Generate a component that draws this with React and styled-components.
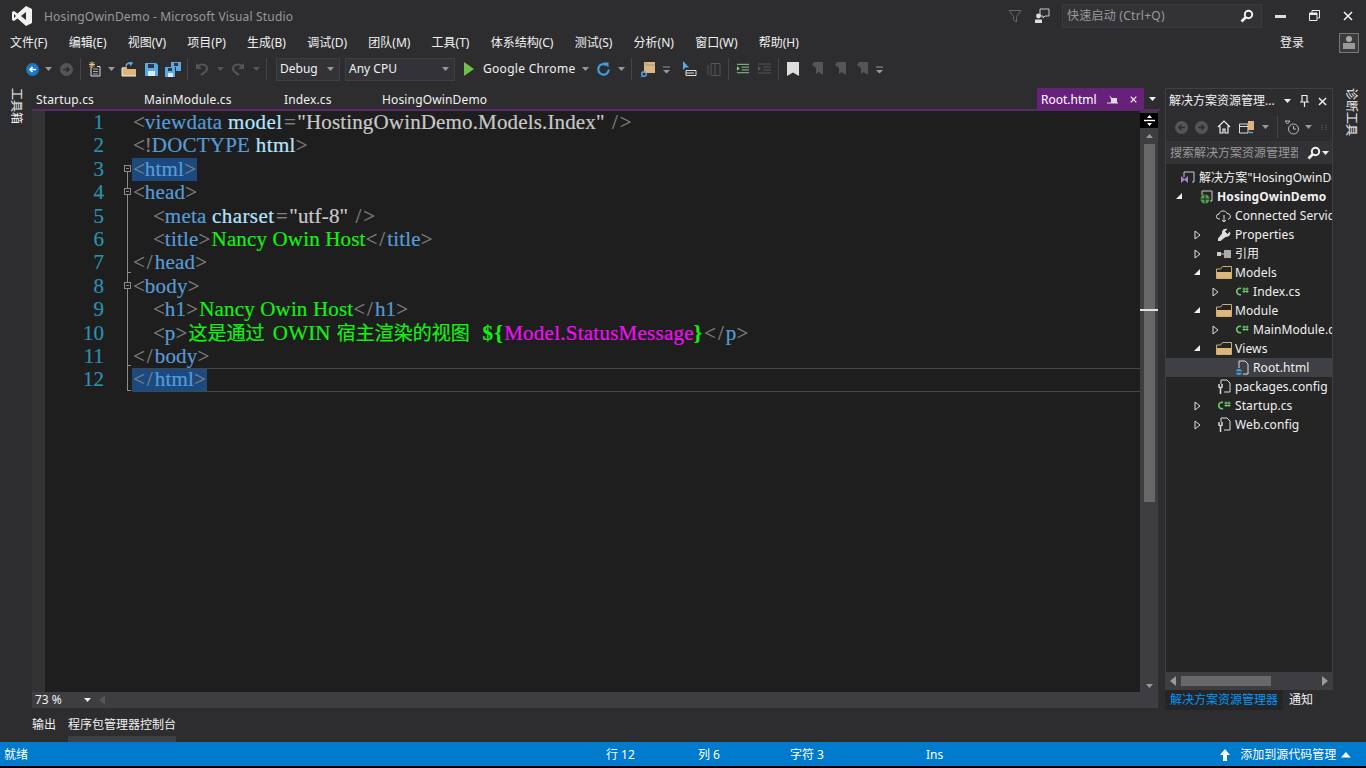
import React from "react";
import styled, { createGlobalStyle } from "styled-components";

const Global = createGlobalStyle`
  html, body { margin: 0; padding: 0; background: #2d2d30; overflow: hidden; }
  * { box-sizing: border-box; }
`;
const UI = `"Noto Sans", "Noto Sans CJK SC", sans-serif`;

const Shell = styled.div`
  width: 1366px; height: 768px; background: #2d2d30; color: #f1f1f1;
  font: 12px/1 ${UI}; display: flex; flex-direction: column; overflow: hidden;
`;
const TitleBar = styled.div`
  height: 31px; display: flex; align-items: center; padding-left: 11px; flex: none;
`;
const AppName = styled.span`
  margin-left: 11px; padding-top: 2px; color: #999; font-size: 12px; letter-spacing: .18px; margin-right: auto;
`;
const QuickLaunch = styled.div`
  width: 200px; height: 24px; margin-left: 10px; background: #333337; border: 1px solid #3a3a3e;
  display: flex; align-items: center; justify-content: space-between; padding: 0 7px 0 4px; color: #999; letter-spacing: .25px;
`;
const WinControls = styled.div`
  display: flex; width: 104px; align-items: center;
`;
const WinBtn = styled.div`
  width: 34px; display: flex; justify-content: center; margin-left: ${p => p.$ml || 0}px;
`;
const MenuBar = styled.div`
  height: 23px; display: flex; align-items: center; padding-left: 10px; gap: 21.2px; flex: none; color: #f1f1f1;
`;
const MenuRight = styled.div`
  margin-left: auto; display: flex; align-items: center; gap: 35px; padding-right: 7px;
`;
const AccountBox = styled.div`
  width: 20px; height: 20px; border: 1px solid #777; background: #3c3c3f;
  display: flex; align-items: center; justify-content: center;
`;
const Toolbar = styled.div`
  height: 30px; display: flex; align-items: center; padding-left: 24px; flex: none;
`;
const Slot = styled.div`
  width: ${p => p.$w}px; height: 24px; display: flex; align-items: center; justify-content: center; flex: none;
`;
const Sep = styled.div`
  width: 1px; height: 22px; background: #46464a; margin: 0 ${p => p.$m ?? 4}px; flex: none;
`;
const Combo = styled.div`
  width: ${p => p.$w}px; height: 23px; background: #333337; border: 1px solid #3f3f46; margin-left: ${p => p.$ml || 0}px;
  display: flex; align-items: center; justify-content: space-between; padding: 0 5px 0 3px; color: #f1f1f1; flex: none;
`;
const RunLabel = styled.span`
  width: 97px; color: #f1f1f1; white-space: nowrap; flex: none; letter-spacing: .3px;
`;

const Main = styled.div`
  margin-top: 4px; height: 622px; display: flex; flex: none;
`;
const SideStrip = styled.div`
  width: ${p => p.$w}px; flex: none; display: flex; justify-content: center; padding-left: ${p => p.$pl || 0}px;
`;
const SideLabel = styled.span`
  writing-mode: vertical-rl; text-orientation: sideways; color: #f1f1f1; font-size: 12px; white-space: nowrap;
`;
const EditorColumn = styled.div`
  width: 1128px; flex: none; display: flex; flex-direction: column;
`;
const TabStrip = styled.div`
  height: 21px; display: flex; align-items: stretch; flex: none;
`;
const Tab = styled.div`
  width: ${p => p.$w}px; padding: 2px 0 0 4px; display: flex; align-items: center; color: #f1f1f1; flex: none; letter-spacing: .15px;
`;
const ActiveTab = styled.div`
  margin-left: auto; width: 107px; background: #68217a; color: #fff; display: flex; align-items: center; padding: 2px 7px 0 4px; flex: none;
`;
const ActiveTabName = styled.span`
  width: 66px; flex: none;
`;
const ActiveTabPin = styled.span`
  width: 23px; flex: none; display: flex;
`;
const TabMenu = styled.div`
  width: 16px; display: flex; align-items: center; justify-content: center; flex: none;
`;
const TabLine = styled.div`
  height: 2px; background: #5a2a68; flex: none;
`;
const EditorBody = styled.div`
  flex: 1; min-height: 0; display: flex; background: #1e1e1e; margin-right: 2px;
`;
const Margin = styled.div`
  width: 13px; flex: none; background: #333334;
`;
const Code = styled.div`
  flex: 1; min-width: 0; display: flex; flex-direction: column; font-family: "Liberation Serif", "Noto Sans CJK SC", serif; font-size: 21px;
  -webkit-text-stroke: .2px;
`;
const Row = styled.div`
  height: 23.4px; line-height: 23.4px; display: flex; flex: none; white-space: nowrap;
`;
const LineNo = styled.div`
  width: 59px; text-align: right; color: #2b91af; flex: none;
`;
const Gutter = styled.div`
  width: 28px; flex: none; display: flex; justify-content: flex-end; align-items: stretch;
`;
const FoldCell = styled.div`
  width: 8px; position: relative;
  ${p => p.$line ? `&::before { content: ""; position: absolute; left: 3px; top: ${p.$start ? "11px" : 0}; bottom: ${p.$end ? "1px" : 0}; width: 1px; background: #8a8a8a; }` : ""}
  ${p => p.$tick ? `&::after { content: ""; position: absolute; left: 3px; bottom: ${p.$tick}px; width: 4px; height: 1px; background: #8a8a8a; }` : ""}
`;
const FoldBox = styled.span`
  position: absolute; left: 0; top: 7px; width: 7px; height: 7px; border: 1px solid #8a8a8a; background: #1e1e1e;
  &::after { content: ""; position: absolute; left: 1px; top: 2px; width: 3px; height: 1px; background: #8a8a8a; }
`;
const CodeText = styled.div`
  flex: 1; min-width: 0; padding-left: ${p => p.$indent ? 20 : 0}px; display: flex;
  ${p => p.$current ? `border-top: 1px solid #464646; border-bottom: 1px solid #464646; line-height: 21.4px;` : ""}
`;
const Mark = styled.span`
  ${p => p.$on ? `background: #1b4a80; padding-left: 1px;` : `padding-left: 1px;`}
  white-space: pre;
`;
const colors = { br: "#808080", tag: "#569cd6", attr: "#b4e4ff", str: "#c8c8c8", txt: "#14f014", mag: "#f010f0" };
const Tok = styled.span`
  color: ${p => colors[p.$k]};
  letter-spacing: ${p => p.$ls || 0}px;
  padding-left: ${p => p.$pl || 0}px;
  ${p => p.$bold ? "font-weight: 700;" : ""}
`;
const Cjk = styled.span`
  font-family: "Noto Sans CJK SC", sans-serif; font-size: 19px; color: #14f014; line-height: 0; word-spacing: ${p => p.$ws}px;
`;
const VScroll = styled.div`
  width: 18px; flex: none; background: #3e3e42; display: flex; flex-direction: column; align-items: center; position: relative;
`;
const Splitter = styled.div`
  width: 18px; height: 15px; margin-top: 2px; background: #000; display: flex; align-items: center; justify-content: center; flex: none;
`;
const ScrollArrowBox = styled.div`
  height: 12px; display: flex; align-items: center; justify-content: center; flex: none; margin-top: ${p => p.$mt || 0}px;
`;
const Thumb = styled.div`
  width: 11px; height: 358px; background: #686868; margin-top: 2px; flex: none;
`;
const ScrollFill = styled.div`
  flex: 1;
`;
const CaretMark = styled.div`
  position: absolute; left: 0; right: 0; top: 198px; height: 2px; background: #e0e0e0;
`;
const HStrip = styled.div`
  height: 16px; flex: none; background: #3e3e42; display: flex; align-items: center; margin-right: 2px;
`;
const Zoom = styled.div`
  width: 58px; margin-left: 3px; height: 14px; display: flex; align-items: center; justify-content: space-between; padding-right: 2px; color: #f1f1f1;
`;
const HArrow = styled.div`
  margin-left: 6px; display: flex;
`;
const BottomGap = styled.div`
  height: 2px; flex: none;
`;
const Panel = styled.div`
  width: 168px; height: 602px; flex: none; border: 1px solid #3f3f46; border-bottom: 0; display: flex; flex-direction: column; overflow: hidden;
`;
const PanelTitle = styled.div`
  height: 24px; display: flex; align-items: center; padding: 0 5px 0 3px; flex: none; white-space: nowrap;
`;
const PanelTitleText = styled.span`
  color: #f1f1f1; flex: 1; min-width: 0;
`;
const PanelIcons = styled.div`
  display: flex; align-items: center; gap: 9px; flex: none;
`;
const PanelTools = styled.div`
  height: 28px; display: flex; align-items: center; padding-left: 5px; flex: none;
`;
const SearchBox = styled.div`
  height: 23px; background: #333337; display: flex; align-items: center; justify-content: space-between; padding: 0 3px 0 4px; color: #999; flex: none; white-space: nowrap; overflow: hidden;
`;
const SearchText = styled.span`
  width: 128px; overflow: hidden; flex: none;
`;
const SearchIcons = styled.span`
  display: flex; align-items: center; gap: 1px;
`;
const Tree = styled.div`
  flex: 1; min-height: 0; padding-top: 4px; background: #252526; overflow: hidden;
`;
const TreeRow = styled.div`
  height: 19px; display: flex; align-items: center; white-space: nowrap; position: relative; letter-spacing: .1px;
  padding-left: ${p => p.$x}px; color: #f1f1f1; font-weight: ${p => p.$bold ? 700 : 400};
  background: ${p => p.$sel ? "#3f3f46" : "transparent"};
`;
const TreeArrow = styled.span`
  position: absolute; left: ${p => p.$x}px; top: 5px; width: 8px; height: 9px; display: flex;
`;
const TreeIcon = styled.span`
  width: 16px; height: 16px; margin-right: 3px; display: flex; align-items: center; justify-content: center; flex: none;
`;
const HBar = styled.div`
  height: 18px; background: #3e3e42; display: flex; align-items: center; justify-content: space-between; padding: 0 4px; flex: none;
`;
const HBarThumb = styled.div`
  width: 90px; height: 10px; background: #686868; margin-left: 5px; margin-right: auto;
`;
const PanelSide = styled.div`
  width: 168px; margin-left: 5px; flex: none; display: flex; flex-direction: column;
`;
const PanelTabs = styled.div`
  height: 20px; display: flex; align-items: center; flex: none;
`;
const PanelTab = styled.div`
  padding: 0 5px; height: 100%; display: flex; align-items: center; margin-right: ${p => p.$mr || 0}px;
  color: ${p => p.$on ? "#0097fb" : "#f1f1f1"};
  background: ${p => p.$on ? "#252526" : "transparent"};
`;
const BottomTabs = styled.div`
  height: 32px; display: flex; flex: none; padding-left: 32px; gap: 12px;
`;
const BottomTab = styled.div`
  height: 26px; padding-top: 9px; color: #f1f1f1; position: relative;
  ${p => p.$on ? `&::after { content: ""; position: absolute; left: 0; right: 0; top: 26px; height: 6px; background: #3f3f46; }` : ""}
`;
const StatusBar = styled.div`
  height: 24px; background: #007acc; color: #fff; display: flex; align-items: center; padding: 2px 0 0 4px; flex: none;
`;
const StatusCell = styled.span`
  width: ${p => p.$w}px; flex: none; white-space: nowrap;
`;
const StatusRight = styled.div`
  margin-left: auto; display: flex; align-items: center; padding-right: 15px;
`;
const StatusGap = styled.span`
  margin: 0 ${p => p.$r || 0}px 0 ${p => p.$l || 0}px; display: flex;
`;
const BlackEdge = styled.div`
  height: 2px; background: #000; flex: none;
`;

/* ---------- icons ---------- */
const Caret = ({ c = "#999", up, s = 1 }) => (
  <svg width={7 * s} height={4 * s} viewBox="0 0 7 4" style={{ flex: "none" }}><path d={up ? "M0 4L3.5 0L7 4Z" : "M0 0H7L3.5 4Z"} fill={c} /></svg>
);
const DoubleCaret = () => (
  <svg width="9" height="10" viewBox="0 0 9 10"><path d="M1 3H8" stroke="#999" /><path d="M1 6H8L4.5 9.5Z" fill="#999" /></svg>
);
const VsLogo = () => (
  <svg width="22" height="22" viewBox="0 0 22 22">
    <path d="M15 1L21 4V18L15 21L6.5 13.5L3 16L1 15V7L3 6L6.5 8.5ZM15 7L10 11L15 15ZM3 9V13L5 11Z" fill="#f1f1f1" fillRule="evenodd" />
  </svg>
);
const Filter = () => (
  <svg width="14" height="14" viewBox="0 0 14 14"><path d="M1 1.5H13L8.5 7.5V13L5.5 11V7.5Z" fill="none" stroke="#666" /></svg>
);
const Feedback = () => (
  <svg width="16" height="16" viewBox="0 0 16 16">
    <path d="M6 1H15V8H11L9 10V8H6Z" fill="none" stroke="#ccc" />
    <circle cx="4.5" cy="8" r="2.4" fill="#ddd" /><path d="M1 15V11.5H8V15Z" fill="#ddd" />
  </svg>
);
const Search = ({ c = "#f1f1f1" }) => (
  <svg width="14" height="14" viewBox="0 0 14 14"><circle cx="8.5" cy="5.5" r="3.7" fill="none" stroke={c} strokeWidth="2" /><path d="M6 8L1.5 12.5" stroke={c} strokeWidth="2.6" /></svg>
);
const Minimize = () => <svg width="11" height="4" viewBox="0 0 11 4"><rect width="11" height="3" y="1" fill="#ddd" /></svg>;
const Restore = () => (
  <svg width="11" height="11" viewBox="0 0 11 11"><path d="M3 2.5V.5H10.5V8H8.5M.5 3H8V10.5H.5Z" fill="none" stroke="#eee" /><rect x=".5" y="3" width="7.5" height="2" fill="#eee" /></svg>
);
const Cross = ({ s = 9, c = "#eee", w = 1.6 }) => (
  <svg width={s} height={s} viewBox="0 0 10 10"><path d="M1 1L9 9M9 1L1 9" stroke={c} strokeWidth={w} /></svg>
);
const Account = () => (
  <svg width="14" height="15" viewBox="0 0 14 15"><circle cx="7" cy="4" r="3" fill="#aaa" /><path d="M1 14V8H13V14Z" fill="#999" /></svg>
);
const Circle = ({ blue }) => (
  <svg width="15" height="15" viewBox="0 0 15 15">
    <circle cx="7.5" cy="7.5" r="6.5" fill={blue ? "#1b78c4" : "#555"} />
    <path d="M11 7.5H5M7.5 5L5 7.5L7.5 10" stroke={blue ? "#fff" : "#2d2d30"} strokeWidth="1.7" fill="none" />
  </svg>
);
const Forward = () => (
  <svg width="15" height="15" viewBox="0 0 15 15">
    <circle cx="7.5" cy="7.5" r="6.5" fill="#555" />
    <path d="M4 7.5H10M7.5 5L10 7.5L7.5 10" stroke="#2d2d30" strokeWidth="1.7" fill="none" />
  </svg>
);
const NewProject = () => (
  <svg width="16" height="16" viewBox="0 0 16 16">
    <path d="M4 5.5V15H13V5.5H10" fill="none" stroke="#ddd" /><path d="M6 8H11M6 10.5H11M6 13H11" stroke="#aaa" />
    <path d="M5 .5V7M2 3.5H8M2.7 1.2L7.3 5.8M7.3 1.2L2.7 5.8" stroke="#e8c57c" />
  </svg>
);
const OpenFile = () => (
  <svg width="16" height="15" viewBox="0 0 16 15">
    <path d="M1 5H6V7H15V14H1Z" fill="#dcb67a" /><path d="M1 6V14H15" fill="none" stroke="#eee" />
    <path d="M5 4.5C5 2 7 1 10 1M8 0L11 1L9 3.5" fill="none" stroke="#5aa8e6" strokeWidth="1.5" />
  </svg>
);
const Save = () => (
  <svg width="13" height="13" viewBox="0 0 13 13">
    <path d="M0 0H11L13 2V13H0Z" fill="#5aa8e6" /><rect x="3" y="1" width="6" height="4" fill="#26384a" /><rect x="3" y="8" width="7" height="5" fill="#dbeaf7" />
  </svg>
);
const SaveAll = () => (
  <svg width="16" height="15" viewBox="0 0 16 15">
    <path d="M6 0H16V9H11V5H6Z" fill="#5aa8e6" /><rect x="9" y="1" width="4" height="3" fill="#26384a" />
    <path d="M0 5H10V15H0Z" fill="#5aa8e6" /><rect x="3" y="6" width="4" height="3" fill="#26384a" /><rect x="3" y="11" width="5" height="4" fill="#dbeaf7" />
  </svg>
);
const Undo = ({ flip }) => (
  <svg width="14" height="15" viewBox="0 0 14 15" style={flip ? { transform: "scaleX(-1)" } : undefined}>
    <path d="M3 4C6 1.5 12 2 12 6.5C12 10 8 11 6 13" fill="none" stroke="#555" strokeWidth="2" /><path d="M1 1V7H7Z" fill="#555" />
  </svg>
);
const Play = () => <svg width="12" height="14" viewBox="0 0 12 14"><path d="M1 0L11 7L1 14Z" fill="#6fbf4a" /></svg>;
const Refresh = () => (
  <svg width="15" height="15" viewBox="0 0 15 15">
    <path d="M10.5 3A5.3 5.3 0 1 0 12.8 7.5" fill="none" stroke="#3f9fe6" strokeWidth="2.2" /><path d="M7 .5H12.5V5.5Z" fill="#3f9fe6" />
  </svg>
);
const FolderFind = () => (
  <svg width="17" height="17" viewBox="0 0 17 17">
    <path d="M4 1H15V12H4Z" fill="#dcb67a" /><path d="M6 1V4H15" fill="none" stroke="#999" /><circle cx="4" cy="13" r="2.3" fill="none" stroke="#5aa8e6" strokeWidth="1.4" /><path d="M2.5 15L1 16.5" stroke="#5aa8e6" />
  </svg>
);
const TreeSync = () => (
  <svg width="15" height="16" viewBox="0 0 15 16">
    <path d="M1 0V9L3.5 6.5H7Z" fill="#5aa8e6" /><path d="M4 9.5H14V14.5H4ZM4 12H12" fill="none" stroke="#ddd" />
  </svg>
);
const DimList = () => (
  <svg width="15" height="15" viewBox="0 0 15 15"><path d="M2 3V13M5 1.5H14V13.5H5ZM9 1.5V13.5" fill="none" stroke="#555" /></svg>
);
const Indent = ({ on }) => (
  <svg width="15" height="12" viewBox="0 0 15 12">
    <path d="M1 1H14M6 4H14M6 7H14M1 10H14" stroke={on ? "#8fd48f" : "#555"} /><path d="M1 3V8L4 5.5Z" fill={on ? "#8fd48f" : "#555"} />
  </svg>
);
const Bookmark = ({ c = "#ddd" }) => <svg width="12" height="14" viewBox="0 0 12 14"><path d="M0 0H12V14L6 10.5L0 14Z" fill={c} /></svg>;
const DimBookmark = () => (
  <svg width="13" height="14" viewBox="0 0 13 14"><path d="M3 0H12V13L7.5 10L5 12V6L1 3Z" fill="#555" /><path d="M0 4L3 7" stroke="#2d2d30" /></svg>
);
const Pin = () => (
  <svg width="11" height="9" viewBox="0 0 11 9"><path d="M2 0L5 3H10V8H4V4Z" fill="#ddd" /><path d="M0 8H11" stroke="#ddd" /></svg>
);
const VPin = () => (
  <svg width="9" height="12" viewBox="0 0 9 12"><path d="M2 .5H7V7H2ZM0 7H9M4.5 7V12" fill="none" stroke="#eee" strokeWidth="1.2" /></svg>
);
const Splitter2 = () => (
  <svg width="11" height="11" viewBox="0 0 11 11"><path d="M0 5.5H11" stroke="#fff" strokeWidth="1.4" /><path d="M5.5 0L8 3H3ZM5.5 11L3 8H8Z" fill="#fff" /></svg>
);
const Home = () => (
  <svg width="14" height="14" viewBox="0 0 14 14"><path d="M1 7L7 1L13 7M3 6V13H6V9H8V13H11V6" fill="none" stroke="#eee" strokeWidth="1.2" /></svg>
);
const SwitchViews = () => (
  <svg width="16" height="15" viewBox="0 0 16 15"><path d="M.5 4H9V13H.5ZM.5 6.5H9" fill="none" stroke="#ddd" /><rect x="9" y="1" width="6" height="9" fill="#dcb67a" /><path d="M10 12.5H14" stroke="#5aa8e6" strokeWidth="1.4" /></svg>
);
const History = () => (
  <svg width="15" height="15" viewBox="0 0 15 15"><circle cx="8.5" cy="9" r="5" fill="none" stroke="#bbb" /><path d="M8.5 6V9H11M0 1H5L2.5 4Z" fill="none" stroke="#bbb" /></svg>
);
const Grip = () => <svg width="6" height="5" viewBox="0 0 6 5"><path d="M1 0V5M5 0V5" stroke="#666" strokeDasharray="1 1" /></svg>;

const Open = () => <svg width="8" height="8" viewBox="0 0 8 8"><path d="M7 1V7H1Z" fill="#eee" /></svg>;
const Closed = () => <svg width="7" height="10" viewBox="0 0 7 10"><path d="M1 1L6 5L1 9Z" fill="none" stroke="#ddd" /></svg>;
const SlnIcon = () => (
  <svg width="16" height="16" viewBox="0 0 16 16"><path d="M4 7V2H14V12H12" fill="none" stroke="#ccc" /><path d="M1 6L4.5 9L8 6V13L4.5 10L1 13Z" fill="#a67bd1" /></svg>
);
const WebProj = () => (
  <svg width="16" height="16" viewBox="0 0 16 16"><path d="M4 6V2H14V12H12" fill="none" stroke="#ccc" /><circle cx="7" cy="10" r="4.5" fill="#4fa34f" /><path d="M2.5 10H11.5M7 5.5V14.5" stroke="#1e1e1e" /></svg>
);
const Cloud = () => (
  <svg width="16" height="14" viewBox="0 0 16 14"><path d="M4 10H3A2.5 2.5 0 0 1 3 5C4 1 10 1 11 4.500A3 3 0 0 1 13 10H12" fill="none" stroke="#ddd" /><path d="M8 6V13M6 11L8 13L10 11" fill="none" stroke="#ddd" /></svg>
);
const Wrench = () => (
  <svg width="14" height="14" viewBox="0 0 14 14"><path d="M13 3.500L10.500 6L8 3.500L10.500 1A4 4 0 0 0 5 5.500L1 10.500V13H3.500L8.500 9A4 4 0 0 0 13 3.500Z" fill="#ddd" /></svg>
);
const RefIcon = () => <svg width="14" height="8" viewBox="0 0 14 8"><rect y="2" width="4" height="4" fill="#ccc" /><path d="M4 4H7" stroke="#ccc" /><rect x="7" width="7" height="8" fill="#aaa" /></svg>;
const Folder = () => (
  <svg width="16" height="13" viewBox="0 0 16 13"><path d="M.5 3V12.500H15.500V.5H6.500L4.500 3Z" fill="none" stroke="#cfae72" /><path d="M1 6H15V12H1Z" fill="#dcb67a" /></svg>
);
const CsIcon = () => (
  <svg width="16" height="12" viewBox="0 0 16 12"><path d="M7 2.500A3.200 3.200 0 1 0 7 8.500" fill="none" stroke="#6fcf6f" strokeWidth="1.600" /><path d="M10 1.500V7M13 1.500V7M8.500 3H14.500M8.500 5.500H14.500" stroke="#6fcf6f" /></svg>
);
const HtmlFile = () => (
  <svg width="16" height="16" viewBox="0 0 16 16"><path d="M5 8V1H11L14 4V14H9" fill="none" stroke="#ddd" /><circle cx="5" cy="12" r="3" fill="#3f9fd6" /><path d="M2 12H8" stroke="#1e1e1e" /></svg>
);
const ConfigFile = () => (
  <svg width="16" height="16" viewBox="0 0 16 16"><path d="M5 5V1H11L14 4V13H8" fill="none" stroke="#ddd" /><path d="M3 5V8L4.500 9V15M6 5V8L4.500 9" fill="none" stroke="#ddd" strokeWidth="1.500" /></svg>
);
const UpArrow = () => (
  <svg width="10" height="12" viewBox="0 0 10 12"><path d="M5 0L10 6H7V12H3V6H0Z" fill="#fff" /></svg>
);
const ArrowLeft = ({ c = "#999" }) => <svg width="6" height="10" viewBox="0 0 6 10"><path d="M6 0V10L0 5Z" fill={c} /></svg>;
const ArrowRight = () => <svg width="6" height="10" viewBox="0 0 6 10"><path d="M0 0V10L6 5Z" fill="#999" /></svg>;

/* ---------- data ---------- */
const lines = [
  { n: 1, parts: [["br", "<"], ["tag", "viewdata"], ["attr", " model"], ["br", "="], ["str", "\"HostingOwinDemo.Models.Index\""], ["br", " />"]] },
  { n: 2, parts: [["br", "<!"], ["tag", "DOCTYPE"], ["attr", " html"], ["br", ">"]] },
  { n: 3, mark: true, fold: "start", parts: [["br", "<"], ["tag", "html"], ["br", ">"]] },
  { n: 4, fold: "box", parts: [["br", "<"], ["tag", "head"], ["br", ">"]] },
  { n: 5, fold: "line", indent: true, parts: [["br", "<"], ["tag", "meta"], ["attr", " charset"], ["br", "="], ["str", "\"utf-8\""], ["br", " />"]] },
  { n: 6, fold: "line", indent: true, parts: [["br", "<"], ["tag", "title"], ["br", ">"], ["txt", "Nancy Owin Host"], ["br", "</"], ["tag", "title"], ["br", ">"]] },
  { n: 7, fold: "tick", parts: [["br", "</"], ["tag", "head"], ["br", ">"]] },
  { n: 8, fold: "box", parts: [["br", "<"], ["tag", "body"], ["br", ">"]] },
  { n: 9, fold: "line", indent: true, parts: [["br", "<"], ["tag", "h1"], ["br", ">"], ["txt", "Nancy Owin Host"], ["br", "</"], ["tag", "h1"], ["br", ">"]] },
  { n: 10, fold: "line", indent: true, parts: [["br", "<"], ["tag", "p"], ["br", ">"], ["cjk", "这是通过 ", 4], ["txt", "OWIN"], ["cjk", " 宿主渲染的视图  ", 2], ["txtb", "${"], ["magb", "Model.StatusMessage"], ["txtc", "}"], ["br", "</"], ["tag", "p"], ["br", ">"]] },
  { n: 11, fold: "tick", parts: [["br", "</"], ["tag", "body"], ["br", ">"]] },
  { n: 12, fold: "end", mark: true, current: true, parts: [["br", "</"], ["tag", "html"], ["br", ">"]] },
];

const tree = [
  { x: 20, icon: <SlnIcon />, label: "解决方案\"HosingOwinDemo\"" },
  { x: 38, icon: <WebProj />, label: "HosingOwinDemo", bold: true, arrow: <Open />, ax: 9 },
  { x: 56, icon: <Cloud />, label: "Connected Services" },
  { x: 56, icon: <Wrench />, label: "Properties", arrow: <Closed />, ax: 28 },
  { x: 56, icon: <RefIcon />, label: "引用", arrow: <Closed />, ax: 28 },
  { x: 56, icon: <Folder />, label: "Models", arrow: <Open />, ax: 27 },
  { x: 74, icon: <CsIcon />, label: "Index.cs", arrow: <Closed />, ax: 46 },
  { x: 56, icon: <Folder />, label: "Module", arrow: <Open />, ax: 27 },
  { x: 74, icon: <CsIcon />, label: "MainModule.cs", arrow: <Closed />, ax: 46 },
  { x: 56, icon: <Folder />, label: "Views", arrow: <Open />, ax: 27 },
  { x: 74, icon: <HtmlFile />, label: "Root.html", sel: true },
  { x: 56, icon: <ConfigFile />, label: "packages.config" },
  { x: 56, icon: <CsIcon />, label: "Startup.cs", arrow: <Closed />, ax: 28 },
  { x: 56, icon: <ConfigFile />, label: "Web.config", arrow: <Closed />, ax: 28 },
];

function spacing(k, v) {
  if (k === "attr") return 0.4;
  if (k === "tag") return 0.2;
  if (k === "str" || k === "txt") return 0.15;
  if (k !== "br") return 0;
  if (v === "=") return 1.5;
  if (v === ">") return 1.2;
  if (v.includes("/")) return 2;
  return 0;
}

function Token({ k, v, ws }) {
  if (k === "cjk") return <Cjk $ws={ws}>{v}</Cjk>;
  if (k === "txtb") return <Tok $k="txt" $bold $ls={1.5}>{v}</Tok>;
  if (k === "txtc") return <Tok $k="txt" $bold $ls={2}>{v}</Tok>;
  if (k === "magb") return <Tok $k="mag" $ls={0.25}>{v}</Tok>;
  return <Tok $k={k} $ls={spacing(k, v)} $pl={v === "=" ? 1.5 : 0}>{v}</Tok>;
}

function Fold({ f }) {
  if (f === "start") return <FoldCell $line $start><FoldBox /></FoldCell>;
  if (f === "box") return <FoldCell $line><FoldBox /></FoldCell>;
  if (f === "line") return <FoldCell $line />;
  if (f === "tick") return <FoldCell $line $tick={2} />;
  if (f === "end") return <FoldCell $line $end $tick={1} />;
  return <FoldCell />;
}

export default function App() {
  return (
    <Shell>
      <Global />
      <TitleBar>
        <VsLogo />
        <AppName>HosingOwinDemo - Microsoft Visual Studio</AppName>
        <Filter />
        <Slot $w={10} />
        <Slot $w={20}><Feedback /></Slot>
        <QuickLaunch>
          <span>快速启动 (Ctrl+Q)</span>
          <Search />
        </QuickLaunch>
        <WinControls>
          <WinBtn $ml={1}><Minimize /></WinBtn>
          <WinBtn><Restore /></WinBtn>
          <WinBtn><Cross s={10} /></WinBtn>
        </WinControls>
      </TitleBar>
      <MenuBar>
        {["文件(F)", "编辑(E)", "视图(V)", "项目(P)", "生成(B)", "调试(D)", "团队(M)", "工具(T)", "体系结构(C)", "测试(S)", "分析(N)", "窗口(W)", "帮助(H)"].map(m => <span key={m}>{m}</span>)}
        <MenuRight>
          <span>登录</span>
          <AccountBox><Account /></AccountBox>
        </MenuRight>
      </MenuBar>
      <Toolbar>
        <Slot $w={16}><Circle blue /></Slot>
        <Slot $w={16}><Caret /></Slot>
        <Slot $w={20}><Forward /></Slot>
        <Sep />
        <Slot $w={19}><NewProject /></Slot>
        <Slot $w={14}><Caret /></Slot>
        <Slot $w={22}><OpenFile /></Slot>
        <Slot $w={22}><Save /></Slot>
        <Slot $w={22}><SaveAll /></Slot>
        <Sep $m={3} />
        <Slot $w={22}><Undo /></Slot>
        <Slot $w={14}><Caret c="#555" /></Slot>
        <Slot $w={22}><Undo flip /></Slot>
        <Slot $w={14}><Caret c="#555" /></Slot>
        <Sep $m={3} />
        <Combo $w={64} $ml={6}><span>Debug</span><Caret /></Combo>
        <Combo $w={110} $ml={5}><span>Any CPU</span><Caret /></Combo>
        <Slot $w={28}><Play /></Slot>
        <RunLabel>Google Chrome</RunLabel>
        <Slot $w={11}><Caret /></Slot>
        <Slot $w={25}><Refresh /></Slot>
        <Slot $w={10}><Caret /></Slot>
        <Sep $m={5} />
        <Slot $w={22}><FolderFind /></Slot>
        <Slot $w={14}><DoubleCaret /></Slot>
        <Slot $w={32}><TreeSync /></Slot>
        <Slot $w={16}><DimList /></Slot>
        <Sep $m={7} />
        <Slot $w={14}><Indent on /></Slot>
        <Slot $w={28}><Indent /></Slot>
        <Sep $m={0} />
        <Slot $w={27}><Bookmark /></Slot>
        <Slot $w={22}><DimBookmark /></Slot>
        <Slot $w={24}><DimBookmark /></Slot>
        <Slot $w={20}><DimBookmark /></Slot>
        <Slot $w={14}><DoubleCaret /></Slot>
      </Toolbar>
      <Main>
        <SideStrip $w={32}><SideLabel>工具箱</SideLabel></SideStrip>
        <EditorColumn>
          <TabStrip>
            <Tab $w={108}>Startup.cs</Tab>
            <Tab $w={140}>MainModule.cs</Tab>
            <Tab $w={98}>Index.cs</Tab>
            <Tab $w={120}>HosingOwinDemo</Tab>
            <ActiveTab>
              <ActiveTabName>Root.html</ActiveTabName>
              <ActiveTabPin><Pin /></ActiveTabPin>
              <Cross s={9} c="#fff" />
            </ActiveTab>
            <TabMenu><Caret c="#eee" /></TabMenu>
          </TabStrip>
          <TabLine />
          <EditorBody>
            <Margin />
            <Code>
              {lines.map(l => (
                <Row key={l.n}>
                  <LineNo>{l.n}</LineNo>
                  <Gutter><Fold f={l.fold} /></Gutter>
                  <CodeText $indent={l.indent} $current={l.current}>
                    <Mark $on={l.mark}>
                      {l.parts.map((p, i) => <Token key={i} k={p[0]} v={p[1]} ws={p[2]} />)}
                    </Mark>
                  </CodeText>
                </Row>
              ))}
            </Code>
            <VScroll>
              <Splitter><Splitter2 /></Splitter>
              <ScrollArrowBox $mt={2}><Caret up /></ScrollArrowBox>
              <Thumb />
              <ScrollFill />
              <ScrollArrowBox><Caret /></ScrollArrowBox>
              <CaretMark />
            </VScroll>
          </EditorBody>
          <HStrip>
            <Zoom><span>73 %</span><Caret c="#eee" /></Zoom>
            <HArrow><ArrowLeft c="#555" /></HArrow>
          </HStrip>
          <BottomGap />
        </EditorColumn>
        <PanelSide>
          <Panel>
            <PanelTitle>
              <PanelTitleText>解决方案资源管理...</PanelTitleText>
              <PanelIcons>
                <Caret c="#eee" />
                <VPin />
                <Cross s={9} />
              </PanelIcons>
            </PanelTitle>
            <PanelTools>
              <Slot $w={20}><Circle /></Slot>
              <Slot $w={20}><Forward /></Slot>
              <Slot $w={25}><Home /></Slot>
              <Slot $w={22}><SwitchViews /></Slot>
              <Slot $w={14}><Caret /></Slot>
              <Sep $m={5} />
              <Slot $w={18}><History /></Slot>
              <Slot $w={14}><Caret /></Slot>
              <Slot $w={18}><Grip /></Slot>
            </PanelTools>
            <SearchBox>
              <SearchText>搜索解决方案资源管理器(Ctrl+;)</SearchText>
              <SearchIcons><Search /><Caret c="#eee" /></SearchIcons>
            </SearchBox>
            <Tree>
              {tree.map(t => (
                <TreeRow key={t.label} $x={t.x - 6} $bold={t.bold} $sel={t.sel}>
                  {t.arrow && <TreeArrow $x={t.ax}>{t.arrow}</TreeArrow>}
                  <TreeIcon>{t.icon}</TreeIcon>
                  {t.label}
                </TreeRow>
              ))}
            </Tree>
            <HBar>
              <ArrowLeft />
              <HBarThumb />
              <ArrowRight />
            </HBar>
          </Panel>
          <PanelTabs>
            <PanelTab $on $mr={1}>解决方案资源管理器</PanelTab>
            <PanelTab>通知</PanelTab>
          </PanelTabs>
        </PanelSide>
        <SideStrip $w={33} $pl={2}><SideLabel>诊断工具</SideLabel></SideStrip>
      </Main>
      <BottomTabs>
        <BottomTab>输出</BottomTab>
        <BottomTab $on>程序包管理器控制台</BottomTab>
      </BottomTabs>
      <StatusBar>
        <StatusCell $w={602}>就绪</StatusCell>
        <StatusCell $w={92}>行 12</StatusCell>
        <StatusCell $w={92}>列 6</StatusCell>
        <StatusCell $w={136}>字符 3</StatusCell>
        <StatusCell $w={60}>Ins</StatusCell>
        <StatusRight>
          <UpArrow />
          <StatusGap $l={10} $r={5}>添加到源代码管理</StatusGap>
          <Caret c="#fff" up s={1.4} />
        </StatusRight>
      </StatusBar>
      <BlackEdge />
    </Shell>
  );
}
